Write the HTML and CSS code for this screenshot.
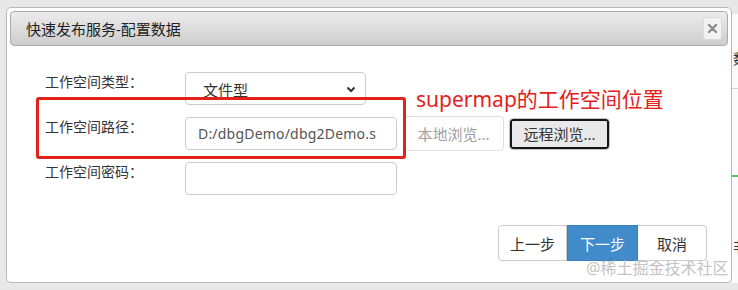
FILE: index.html
```html
<!DOCTYPE html>
<html lang="zh-CN">
<head>
    <meta charset="UTF-8">
    <title>快速发布服务-配置数据</title>
    <link rel="stylesheet" href="styles.css">
</head>
<body>
    <!-- page content behind the modal -->
    <div class="behind">
        <span class="behind-char top">数</span>
        <div class="behind-line"></div>
        <div class="behind-green"></div>
        <span class="behind-char low">非</span>
    </div>

    <div class="dialog">
        <div class="dialog-header">
            <span class="dialog-title">快速发布服务-配置数据</span>
            <button class="close-btn">
                <svg width="9" height="9" viewBox="0 0 9 9"><path d="M1 1L8 8M8 1L1 8" stroke="#8c8c8c" stroke-width="2.4" stroke-linecap="round"/></svg>
            </button>
        </div>

        <div class="dialog-body">
            <div class="form-row">
                <label class="form-label">工作空间类型：</label>
                <div class="fake-select">
                    <span>文件型</span>
                    <svg width="10" height="7" viewBox="0 0 10 7"><path d="M1.5 1.5L5 5L8.5 1.5" fill="none" stroke="#333" stroke-width="2"/></svg>
                </div>
            </div>
            <div class="form-row">
                <label class="form-label">工作空间路径：</label>
                <input class="text-input" type="text" value="D:/dbgDemo/dbg2Demo.s">
                <button class="browse-btn disabled">本地浏览...</button>
                <button class="browse-btn remote">远程浏览...</button>
            </div>
            <div class="form-row">
                <label class="form-label">工作空间密码：</label>
                <input class="text-input" type="password">
            </div>
        </div>

        <div class="dialog-footer">
            <div class="btn-group">
                <button class="btn">上一步</button>
                <button class="btn primary">下一步</button>
                <button class="btn">取消</button>
            </div>
        </div>

        <!-- annotation drawn over the screenshot -->
        <div class="note-box"></div>
        <div class="note-text">supermap的工作空间位置</div>
        <div class="watermark">@稀土掘金技术社区</div>
    </div>
</body>
</html>
```

FILE: styles.css
```css
body {
    margin: 0;
    width: 738px;
    height: 290px;
    overflow: hidden;
    background-color: #e8e8e8;
    font-family: "Noto Sans", "Noto Sans CJK SC", sans-serif;
    font-size: 14px;
    color: #333;
    position: relative;
}

/* page behind the modal */
.behind {
    position: absolute;
    left: 732px;
    top: 14px;
    right: 0;
    bottom: 7px;
    background-color: #fbfbfb;
    overflow: hidden;
}

.behind-char {
    position: absolute;
    left: 1px;
    font-size: 14px;
    color: #333;
}

.behind-char.top { top: 34px; }
.behind-char.low { top: 222px; }

.behind-line {
    position: absolute;
    left: 0;
    right: 0;
    top: 74px;
    border-top: 1px solid #d0d0d0;
}

.behind-green {
    position: absolute;
    left: 0;
    right: 0;
    top: 161px;
    height: 2px;
    background-color: #5cc45c;
}

/* dialog */
.dialog {
    position: relative;
    z-index: 1;
    margin: 7px 0 0 6px;
    width: 726px;
    height: 276px;
    box-sizing: border-box;
    padding: 3px;
    background-color: #fff;
    border: 1px solid #b9b9b9;
    border-radius: 5px;
}

.dialog-header {
    display: flex;
    align-items: center;
    justify-content: space-between;
    height: 35px;
    box-sizing: border-box;
    padding: 0 5px 0 15px;
    border: 1px solid #aaa;
    border-radius: 4px;
    background: linear-gradient(#ececec, #cdcdcd);
}

.dialog-title {
    color: #222;
    font-size: 15px;
}

.close-btn {
    width: 19px;
    height: 23px;
    padding: 0;
    display: flex;
    align-items: center;
    justify-content: center;
    background-color: #f2f2f2;
    border: 1px solid #dcdcdc;
    border-radius: 3px;
}

.dialog-body {
    display: flex;
    flex-direction: column;
    gap: 12px;
    padding: 26px 0 0 35px;
}

.form-row {
    display: flex;
    align-items: center;
    height: 33px;
}

.form-label {
    width: 140px;
    align-self: flex-start;
    line-height: 20px;
    color: #333;
}

.fake-select {
    width: 181px;
    height: 33px;
    box-sizing: border-box;
    display: flex;
    align-items: center;
    justify-content: space-between;
    padding: 2px 9px 0 17px;
    border: 1px solid #ccc;
    border-radius: 4px;
    color: #333;
    font-size: 15px;
}

.text-input {
    width: 212px;
    height: 33px;
    box-sizing: border-box;
    padding: 0 12px;
    border: 1px solid #ccc;
    border-radius: 4px;
    font-family: "Noto Sans", "Noto Sans CJK SC", sans-serif;
    font-size: 14px;
    letter-spacing: 0.2px;
    color: #555;
    outline: none;
}

.browse-btn {
    width: 101px;
    box-sizing: border-box;
    font-family: "Noto Sans", "Noto Sans CJK SC", sans-serif;
    font-size: 15px;
    border-radius: 4px;
    padding: 0;
}

.browse-btn.disabled {
    height: 35px;
    margin-left: 6px;
    background-color: #fff;
    border: 1px solid #e0e0e0;
    color: #a0a0a0;
}

.browse-btn.remote {
    height: 32px;
    margin-left: 5px;
    background-color: #e9e9e9;
    border: 1px solid #c4c4c4;
    box-shadow: inset 0 0 0 2px #161616;
    color: #333;
}

.dialog-footer {
    display: flex;
    justify-content: flex-end;
    padding-right: 21px;
    margin-top: 30px;
}

.btn-group {
    display: flex;
}

.btn {
    height: 36px;
    width: 69px;
    padding: 0;
    font-family: "Noto Sans", "Noto Sans CJK SC", sans-serif;
    font-size: 15px;
    color: #333;
    background-color: #fff;
    border: 1px solid #ccc;
    border-radius: 0;
}

.btn:first-child {
    border-radius: 4px 0 0 4px;
}

.btn:last-child {
    border-radius: 0 4px 4px 0;
    border-left: none;
}

.btn.primary {
    width: 71px;
    color: #fff;
    background-color: #428bca;
    border-color: #3a80bd;
}

/* red annotation */
.note-box {
    position: absolute;
    left: 29px;
    top: 89px;
    width: 370px;
    height: 62px;
    box-sizing: border-box;
    border: 3px solid #e4221c;
    border-radius: 3px;
}

.note-text {
    position: absolute;
    left: 409px;
    top: 77px;
    font-size: 21px;
    line-height: 28px;
    color: #e4221c;
    white-space: nowrap;
}

.watermark {
    position: absolute;
    left: 579px;
    top: 250px;
    font-size: 16px;
    line-height: 20px;
    color: #c4c4c4;
    white-space: nowrap;
}
```
